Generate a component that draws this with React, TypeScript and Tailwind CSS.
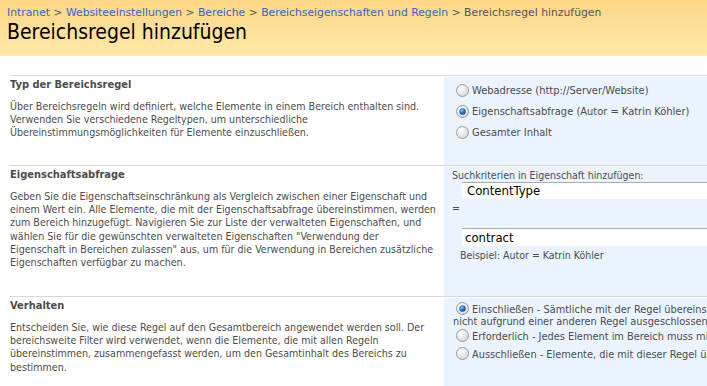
import type { ReactNode } from "react";

function Radio({ checked }: { checked?: boolean }) {
  return (
    <svg width="13" height="13" viewBox="0 0 13 13" className="shrink-0">
      <defs>
        <radialGradient id={checked ? "rgOn" : "rgOff"} cx="0.35" cy="0.3" r="0.8">
          <stop offset="0" stopColor="#ffffff" />
          <stop offset="1" stopColor="#d4d4d4" />
        </radialGradient>
        <radialGradient id="dot" cx="0.4" cy="0.35" r="0.7">
          <stop offset="0" stopColor="#7fc4ff" />
          <stop offset="0.6" stopColor="#1e6fd0" />
          <stop offset="1" stopColor="#0b3a7a" />
        </radialGradient>
      </defs>
      <circle cx="6.5" cy="6.5" r="6" fill={checked ? "url(#rgOn)" : "url(#rgOff)"} stroke="#9a9a9a" />
      {checked && <circle cx="6.5" cy="6.5" r="3.2" fill="url(#dot)" />}
    </svg>
  );
}

function Section({ title, lines, children }: { title: string; lines: string[]; children: ReactNode }) {
  return (
    <div className="ml-[10px] flex border-t border-[#d8d8d8]">
      <div className="w-[434px] shrink-0 pt-[2px]">
        <div className="text-[11px] leading-[14px] font-bold text-[#4c4c4c]">{title}</div>
        <p className="mt-[8px] whitespace-nowrap text-[10.6px] leading-[13.2px] text-[#4c4c4c]">
          {lines.map((l, i) => (
            <span key={i} className="block">{l}</span>
          ))}
        </p>
      </div>
      <div className="mt-[1px] w-[480px] shrink-0 bg-[#ebf3ff] text-[10.5px] text-[#4c4c4c]">{children}</div>
    </div>
  );
}

export default function App() {
  return (
    <div className="w-[707px] h-[386px] overflow-hidden bg-white font-['DejaVu_Sans_Condensed','Liberation_Sans',Arial,sans-serif]">
      {/* Titelbereich */}
      <div className="h-[56px] bg-gradient-to-b from-[#fdd685] to-[#fee9a9] px-[7px] pt-[5px]">
        <div className="whitespace-nowrap text-[10.8px] leading-[15px] font-['DejaVu_Sans',sans-serif] text-[#3b62c4]">
          Intranet <span className="text-[#555]">&gt;</span> Websiteeinstellungen <span className="text-[#555]">&gt;</span> Bereiche{" "}
          <span className="text-[#555]">&gt;</span> Bereichseigenschaften und Regeln{" "}
          <span className="text-[#555]">&gt; Bereichsregel hinzufügen</span>
        </div>
        <h1 className="text-[21px] leading-[24px] text-black">Bereichsregel hinzufügen</h1>
      </div>

      <div className="h-[19px]" />

      <Section
        title="Typ der Bereichsregel"
        lines={[
          "Über Bereichsregeln wird definiert, welche Elemente in einem Bereich enthalten sind.",
          "Verwenden Sie verschiedene Regeltypen, um unterschiedliche",
          "Übereinstimmungsmöglichkeiten für Elemente einzuschließen.",
        ]}
      >
        <div className="h-[88px] pl-[12px] pt-[7px] flex flex-col gap-[8px] text-[11px]">
          <label className="flex items-center gap-[3px] leading-[13px]"><Radio /> Webadresse (http://Server/Website)</label>
          <label className="flex items-center gap-[3px] leading-[13px]"><Radio checked /> Eigenschaftsabfrage (Autor = Katrin Köhler)</label>
          <label className="flex items-center gap-[3px] leading-[13px]"><Radio /> Gesamter Inhalt</label>
        </div>
      </Section>

      <Section
        title="Eigenschaftsabfrage"
        lines={[
          "Geben Sie die Eigenschaftseinschränkung als Vergleich zwischen einer Eigenschaft und",
          "einem Wert ein. Alle Elemente, die mit der Eigenschaftsabfrage übereinstimmen, werden",
          "zum Bereich hinzugefügt. Navigieren Sie zur Liste der verwalteten Eigenschaften, und",
          "wählen Sie für die gewünschten verwalteten Eigenschaften \"Verwendung der",
          "Eigenschaft in Bereichen zulassen\" aus, um für die Verwendung in Bereichen zusätzliche",
          "Eigenschaften verfügbar zu machen.",
        ]}
      >
        <div className="h-[129px] pl-[8px] pt-[1px]">
          <div className="leading-[14px]">Suchkriterien in Eigenschaft hinzufügen:</div>
          <div className="ml-[10px] h-[17px] w-[400px] border-t border-[#a5acb5] bg-white pl-[5px] text-[13px] leading-[16px] text-black">ContentType</div>
          <div className="mt-[2px] h-[14px] leading-[14px]">=</div>
          <div className="mt-[13px] ml-[10px] h-[18px] w-[400px] border-t border-[#a5acb5] bg-white pl-[3px] text-[13px] leading-[17px] text-black">contract</div>
          <div className="mt-[2px] ml-[8px] leading-[14px]">Beispiel: Autor = Katrin Köhler</div>
        </div>
      </Section>

      <Section
        title="Verhalten"
        lines={[
          "Entscheiden Sie, wie diese Regel auf den Gesamtbereich angewendet werden soll. Der",
          "bereichsweite Filter wird verwendet, wenn die Elemente, die mit allen Regeln",
          "übereinstimmen, zusammengefasst werden, um den Gesamtinhalt des Bereichs zu",
          "bestimmen.",
        ]}
      >
        <div className="h-[100px] pl-[9px] pt-[4px] whitespace-nowrap text-[10.9px]">
          <div className="leading-[12px]">
            <span className="ml-[3px] mr-[3px] inline-block align-[-2px]"><Radio checked /></span>
            Einschließen - Sämtliche mit der Regel übereinstimmenden Elemente werden eingeschlossen, sofern sie
            <br />
            nicht aufgrund einer anderen Regel ausgeschlossen sind.
          </div>
          <div className="mt-[1px] leading-[16px]">
            <span className="ml-[3px] mr-[3px] inline-block align-[-2px]"><Radio /></span>
            Erforderlich - Jedes Element im Bereich muss mit dieser Regel übereinstimmen.
          </div>
          <div className="mt-[2px] leading-[16px]">
            <span className="ml-[3px] mr-[3px] inline-block align-[-2px]"><Radio /></span>
            Ausschließen - Elemente, die mit dieser Regel übereinstimmen, werden ausgeschlossen.
          </div>
        </div>
      </Section>
    </div>
  );
}
